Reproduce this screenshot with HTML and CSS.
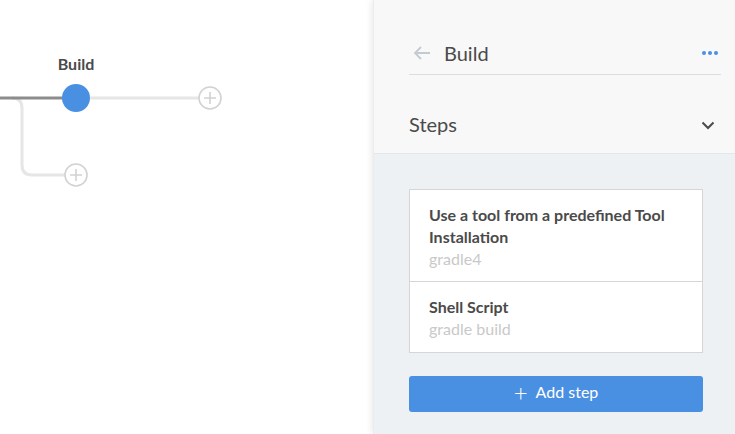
FILE: index.html
```html
<!DOCTYPE html>
<html>
<head>
<meta charset="utf-8">
<link rel="stylesheet" href="styles.css">
</head>
<body>
<div class="app">
  <div class="canvas">
    <svg class="graph" width="373" height="434" viewBox="0 0 373 434">
      <text class="stage-label" x="76" y="70" text-anchor="middle">Build</text>
      <path d="M12 98 Q22 98 22 108 V165 Q22 175 32 175 H65" class="line-light"/>
      <path d="M90 98 H199" class="line-light"/>
      <path d="M0 98 H64" class="line-dark"/>
      <circle cx="76" cy="98" r="14" class="node"/>
      <g class="add">
        <circle cx="210" cy="98" r="11"/>
        <path d="M204 98 H216 M210 92 V104"/>
      </g>
      <g class="add">
        <circle cx="76" cy="175" r="11"/>
        <path d="M70 175 H82 M76 169 V181"/>
      </g>
    </svg>
  </div>
  <aside class="panel">
    <div class="panel-top">
      <div class="header">
        <svg class="back" width="18" height="14" viewBox="0 0 18 14"><path d="M17 7 H2 M8 1 L2 7 L8 13"/></svg>
        <span class="title">Build</span>
        <svg class="more" width="18" height="6" viewBox="0 0 18 6"><circle cx="3" cy="3" r="2"/><circle cx="9" cy="3" r="2"/><circle cx="15" cy="3" r="2"/></svg>
      </div>
      <div class="steps-head">
        <span class="steps-title">Steps</span>
        <svg class="chev" width="14" height="9" viewBox="0 0 14 9"><path d="M1.5 1.5 L7 7 L12.5 1.5"/></svg>
      </div>
    </div>
    <div class="panel-body">
      <div class="step-list">
        <div class="step">
          <div class="step-name">Use a tool from a predefined Tool Installation</div>
          <div class="step-sub">gradle4</div>
        </div>
        <div class="step">
          <div class="step-name">Shell Script</div>
          <div class="step-sub">gradle build</div>
        </div>
      </div>
      <button class="add-step"><span class="plus">+</span>Add step</button>
    </div>
  </aside>
</div>
</body>
</html>
```

FILE: styles.css
```css
* { box-sizing: border-box; }
html, body { margin: 0; padding: 0; }
body {
  width: 735px;
  height: 434px;
  overflow: hidden;
  font-family: Lato, "Liberation Sans", sans-serif;
  color: #4a4a4a;
  background: #ffffff;
}
.app {
  display: flex;
  width: 735px;
  height: 434px;
}
.canvas {
  width: 373px;
  flex: none;
  background: #ffffff;
}
.graph { display: block; }
.stage-label {
  font-family: Lato, "Liberation Sans", sans-serif;
  font-weight: 700;
  font-size: 16px;
  fill: #4a4a4a;
}
.line-light { fill: none; stroke: #e6e6e6; stroke-width: 3; }
.line-dark { fill: none; stroke: #8c8c8c; stroke-width: 3; }
.node { fill: #4a90e2; }
.add circle { fill: #ffffff; stroke: #d2d2d2; stroke-width: 1.6; }
.add path { stroke: #d2d2d2; stroke-width: 1.6; }

.panel {
  flex: 1;
  display: flex;
  flex-direction: column;
  box-shadow: -2px 0 6px rgba(0,0,0,0.08);
  border-left: 1px solid #ececec;
  position: relative;
  background: #eef1f4;
}
.panel-top {
  background: #f8f8f8;
  padding: 33px 14px 0 35px;
  border-bottom: 1px solid #e3e7eb;
}
.header {
  display: flex;
  align-items: center;
  height: 42px;
  border-bottom: 1px solid #d9dee3;
  padding-bottom: 2px;
}
.back {
  margin-left: 4px;
  fill: none;
  stroke: #c3cad1;
  stroke-width: 1.8;
}
.title {
  margin-left: 13px;
  font-size: 20px;
  line-height: 24px;
  flex: 1;
}
.more { fill: #4a90e2; margin-right: 2px; }
.steps-head {
  display: flex;
  align-items: center;
  padding: 37px 6px 17px 0;
}
.steps-title {
  flex: 1;
  font-size: 20px;
  line-height: 24px;
}
.chev { fill: none; stroke: #4a4a4a; stroke-width: 2; margin-top: 2px; }

.panel-body {
  flex: 1;
  padding: 35px 32px 0 35px;
}
.step-list {
  background: #ffffff;
  border: 1px solid #d6d6d6;
}
.step {
  padding: 14px 19px 11px;
}
.step + .step {
  border-top: 1px solid #d6d6d6;
  padding-bottom: 12px;
}
.step-name {
  font-weight: 700;
  font-size: 16px;
  line-height: 22px;
  color: #4a4a4a;
}
.step-sub {
  font-size: 16px;
  line-height: 22px;
  color: #c9c9c9;
}
.add-step {
  display: flex;
  align-items: center;
  justify-content: center;
  width: 100%;
  height: 36px;
  margin-top: 23px;
  border: none;
  border-radius: 3px;
  background: #4a90e2;
  color: #ffffff;
  font-family: Lato, "Liberation Sans", sans-serif;
  font-size: 16px;
  line-height: 20px;
  padding: 0 0 5px;
}
.plus {
  font-size: 24px;
  font-weight: 300;
  margin-right: 8px;
  line-height: 20px;
}
```
